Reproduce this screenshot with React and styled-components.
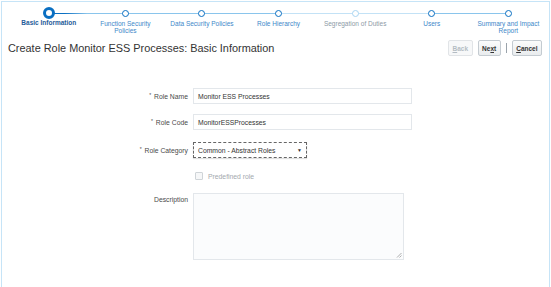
import React from "react";
import styled, { createGlobalStyle } from "styled-components";

const Global = createGlobalStyle`
  html, body { margin: 0; padding: 0; background: #fff; }
  body { font-family: "Liberation Sans", Arial, sans-serif; color: #333; }
`;

const Frame = styled.div`
  box-sizing: border-box;
  margin: 1px 0 0 1px;
  width: 549px;
  height: 286px;
  border: 1px solid #c6e4f7;
  border-bottom: none;
  overflow: hidden;
`;

const Train = styled.div`
  display: flex;
  padding: 5px 0 0 8.5px;
  height: 30px;
`;

const Stop = styled.div`
  position: relative;
  width: 76.6px;
  display: flex;
  flex-direction: column;
  align-items: center;

  &::before, &::after {
    content: "";
    position: absolute;
    top: 6px;
    height: 1px;
  }
  &::before {
    left: 0;
    right: 50%;
    background: ${(p) => (p.$first ? "transparent" : p.$leftColor || "#8ac5ec")};
  }
  &::after {
    left: 50%;
    right: 0;
    background: ${(p) => (p.$last ? "transparent" : p.$rightColor || "#8ac5ec")};
  }
`;

const Dot = styled.span`
  position: relative;
  z-index: 1;
  box-sizing: border-box;
  width: ${(p) => (p.$current ? 12 : 7)}px;
  height: ${(p) => (p.$current ? 12 : 7)}px;
  margin-top: ${(p) => (p.$current ? 0 : 3)}px;
  margin-bottom: ${(p) => (p.$current ? 1 : 4)}px;
  border-radius: 50%;
  background: #fff;
  border: ${(p) => (p.$current ? 3 : 1.5)}px solid ${(p) => (p.$muted ? "#a9d5f2" : "#0a6fc2")};
`;

const StopLabel = styled.span`
  font-size: 6.5px;
  line-height: 6.7px;
  text-align: center;
  color: ${(p) => (p.$current ? "#1f5c99" : p.$muted ? "#8c9aa6" : "#3e87c9")};
  font-weight: ${(p) => (p.$current ? "bold" : "normal")};
  white-space: pre-line;
`;

const Header = styled.div`
  display: flex;
  align-items: center;
  justify-content: space-between;
  padding: 1px 7px 0 6px;
  height: 20px;
`;

const Title = styled.h1`
  margin: 0;
  font-size: 10.9px;
  font-weight: normal;
  color: #333;
`;

const Actions = styled.div`
  display: flex;
  align-items: center;
  gap: 5px;
`;

const Button = styled.button`
  box-sizing: border-box;
  height: 16px;
  padding: 0 3.5px;
  font-family: inherit;
  font-size: 6.5px;
  font-weight: bold;
  border-radius: 2px;
  border: 1px solid ${(p) => (p.disabled ? "#e1e4e7" : "#c4cbd1")};
  background: ${(p) => (p.disabled ? "#f7f8f9" : "linear-gradient(#fbfcfc, #e9ecee)")};
  color: ${(p) => (p.disabled ? "#b4bcc3" : "#333")};
  u { text-decoration: underline; }
`;

const Divider = styled.span`
  width: 1px;
  height: 10px;
  background: #9aa3ab;
`;

const Form = styled.div`
  display: grid;
  grid-template-columns: 186px 220px;
  column-gap: 5px;
  align-items: center;
  margin-top: 30px;
`;

const Label = styled.label`
  font-size: 6.8px;
  color: #4a4a4a;
  text-align: right;
  align-self: ${(p) => (p.$top ? "start" : "center")};
  padding-top: ${(p) => (p.$top ? 3 : 0)}px;
  margin-top: ${(p) => p.$mt || 0}px;
  sup { font-size: 5px; vertical-align: 2px; margin-right: 1px; }
`;

const Input = styled.div`
  box-sizing: border-box;
  height: 16px;
  width: ${(p) => p.$w || 219}px;
  border: 1px solid #e3e7eb;
  background: #fff;
  font-size: 6.8px;
  color: #333;
  display: flex;
  align-items: center;
  padding-left: 4px;
  margin-top: ${(p) => p.$mt || 0}px;
`;

const Select = styled(Input)`
  border: 1px dashed #666;
  box-shadow: 0 1px 1px rgba(0, 0, 0, 0.12);
  justify-content: space-between;
  padding-right: 4px;
  span { font-size: 5px; }
`;

const Check = styled.div`
  grid-column: 2;
  display: flex;
  align-items: center;
  gap: 5px;
  margin: 13px 0 0 2px;
  height: 10px;
  font-size: 6.8px;
  color: #a3a9ae;
`;

const Box = styled.span`
  width: 6px;
  height: 6px;
  border: 1px solid #cfd4d8;
  border-radius: 1px;
  background: #f6f7f8;
`;

const TextArea = styled.div`
  position: relative;
  box-sizing: border-box;
  width: 211px;
  height: 67px;
  margin-top: 12px;
  border: 1px solid #e3e7eb;
  background: #fbfcfd;
`;

const Grip = styled.svg`
  position: absolute;
  right: 1px;
  bottom: 1px;
`;

const stops = [
  { label: "Basic Information", current: true, right: "linear-gradient(90deg,#0a6fc2,#0a6fc2 40%,#8ac5ec)" },
  { label: "Function Security\nPolicies" },
  { label: "Data Security Policies" },
  { label: "Role Hierarchy", right: "#c3e2f6" },
  { label: "Segregation of Duties", muted: true, left: "#c3e2f6", right: "#c3e2f6" },
  { label: "Users", left: "#c3e2f6" },
  { label: "Summary and Impact\nReport" },
];

export default function App() {
  return (
    <>
      <Global />
      <Frame>
        <Train>
          {stops.map((s, i) => (
            <Stop
              key={s.label}
              $first={i === 0}
              $last={i === stops.length - 1}
              $leftColor={s.left}
              $rightColor={s.right}
            >
              <Dot $current={s.current} $muted={s.muted} />
              <StopLabel $current={s.current} $muted={s.muted}>{s.label}</StopLabel>
            </Stop>
          ))}
        </Train>
        <Header>
          <Title>Create Role Monitor ESS Processes: Basic Information</Title>
          <Actions>
            <Button disabled><u>B</u>ack</Button>
            <Button>Ne<u>x</u>t</Button>
            <Divider />
            <Button><u>C</u>ancel</Button>
          </Actions>
        </Header>
        <Form>
          <Label><sup>*</sup> Role Name</Label>
          <Input>Monitor ESS Processes</Input>
          <Label $mt={10}><sup>*</sup> Role Code</Label>
          <Input $mt={10}>MonitorESSProcesses</Input>
          <Label $mt={12}><sup>*</sup> Role Category</Label>
          <Select $mt={12} $w={114}>
            Common - Abstract Roles<span>▼</span>
          </Select>
          <Check><Box />Predefined role</Check>
          <Label $top $mt={12}>Description</Label>
          <TextArea>
            <Grip width="6" height="6" viewBox="0 0 6 6">
              <path d="M5.5 1 L1 5.5 M5.5 3.5 L3.5 5.5" stroke="#999" strokeWidth="0.8" />
            </Grip>
          </TextArea>
        </Form>
      </Frame>
    </>
  );
}
